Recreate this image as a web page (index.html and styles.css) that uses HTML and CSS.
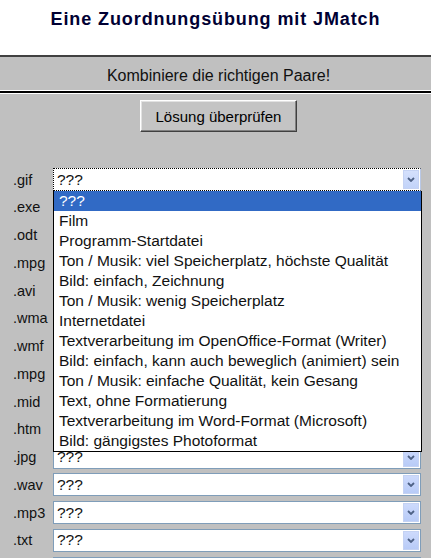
FILE: index.html
```html
<!DOCTYPE html>
<html lang="de">
<head>
<meta charset="utf-8">
<title>Eine Zuordnungsübung mit JMatch</title>
<link rel="stylesheet" href="styles.css">
</head>
<body>
<h2 class="title">Eine Zuordnungsübung mit JMatch</h2>
<div class="panel">
  <div class="instructions">Kombiniere die richtigen Paare!</div>
  <div class="rule"></div>
  <div class="actions"><button class="check" type="button">Lösung überprüfen</button></div>
  <div class="rows">
    <div class="row"><span class="label">.gif</span><div class="select is-open"><span class="value">???</span><span class="arrow"><svg width="8" height="5" viewBox="0 0 8 5"><path d="M1 1 L4 4 L7 1" fill="none" stroke="#4d6185" stroke-width="1.8"/></svg></span></div></div>
    <div class="row"><span class="label">.exe</span><div class="select"><span class="value">???</span><span class="arrow"><svg width="8" height="5" viewBox="0 0 8 5"><path d="M1 1 L4 4 L7 1" fill="none" stroke="#4d6185" stroke-width="1.8"/></svg></span></div></div>
    <div class="row"><span class="label">.odt</span><div class="select"><span class="value">???</span><span class="arrow"><svg width="8" height="5" viewBox="0 0 8 5"><path d="M1 1 L4 4 L7 1" fill="none" stroke="#4d6185" stroke-width="1.8"/></svg></span></div></div>
    <div class="row"><span class="label">.mpg</span><div class="select"><span class="value">???</span><span class="arrow"><svg width="8" height="5" viewBox="0 0 8 5"><path d="M1 1 L4 4 L7 1" fill="none" stroke="#4d6185" stroke-width="1.8"/></svg></span></div></div>
    <div class="row"><span class="label">.avi</span><div class="select"><span class="value">???</span><span class="arrow"><svg width="8" height="5" viewBox="0 0 8 5"><path d="M1 1 L4 4 L7 1" fill="none" stroke="#4d6185" stroke-width="1.8"/></svg></span></div></div>
    <div class="row"><span class="label">.wma</span><div class="select"><span class="value">???</span><span class="arrow"><svg width="8" height="5" viewBox="0 0 8 5"><path d="M1 1 L4 4 L7 1" fill="none" stroke="#4d6185" stroke-width="1.8"/></svg></span></div></div>
    <div class="row"><span class="label">.wmf</span><div class="select"><span class="value">???</span><span class="arrow"><svg width="8" height="5" viewBox="0 0 8 5"><path d="M1 1 L4 4 L7 1" fill="none" stroke="#4d6185" stroke-width="1.8"/></svg></span></div></div>
    <div class="row"><span class="label">.mpg</span><div class="select"><span class="value">???</span><span class="arrow"><svg width="8" height="5" viewBox="0 0 8 5"><path d="M1 1 L4 4 L7 1" fill="none" stroke="#4d6185" stroke-width="1.8"/></svg></span></div></div>
    <div class="row"><span class="label">.mid</span><div class="select"><span class="value">???</span><span class="arrow"><svg width="8" height="5" viewBox="0 0 8 5"><path d="M1 1 L4 4 L7 1" fill="none" stroke="#4d6185" stroke-width="1.8"/></svg></span></div></div>
    <div class="row"><span class="label">.htm</span><div class="select"><span class="value">???</span><span class="arrow"><svg width="8" height="5" viewBox="0 0 8 5"><path d="M1 1 L4 4 L7 1" fill="none" stroke="#4d6185" stroke-width="1.8"/></svg></span></div></div>
    <div class="row"><span class="label">.jpg</span><div class="select"><span class="value">???</span><span class="arrow"><svg width="8" height="5" viewBox="0 0 8 5"><path d="M1 1 L4 4 L7 1" fill="none" stroke="#4d6185" stroke-width="1.8"/></svg></span></div></div>
    <div class="row"><span class="label">.wav</span><div class="select"><span class="value">???</span><span class="arrow"><svg width="8" height="5" viewBox="0 0 8 5"><path d="M1 1 L4 4 L7 1" fill="none" stroke="#4d6185" stroke-width="1.8"/></svg></span></div></div>
    <div class="row"><span class="label">.mp3</span><div class="select"><span class="value">???</span><span class="arrow"><svg width="8" height="5" viewBox="0 0 8 5"><path d="M1 1 L4 4 L7 1" fill="none" stroke="#4d6185" stroke-width="1.8"/></svg></span></div></div>
    <div class="row"><span class="label">.txt</span><div class="select"><span class="value">???</span><span class="arrow"><svg width="8" height="5" viewBox="0 0 8 5"><path d="M1 1 L4 4 L7 1" fill="none" stroke="#4d6185" stroke-width="1.8"/></svg></span></div></div>
    <div class="row"><span class="label">.doc</span><div class="select"><span class="value">???</span><span class="arrow"><svg width="8" height="5" viewBox="0 0 8 5"><path d="M1 1 L4 4 L7 1" fill="none" stroke="#4d6185" stroke-width="1.8"/></svg></span></div></div>
    <ul class="listbox">
      <li class="selected">???</li>
      <li>Film</li>
      <li>Programm-Startdatei</li>
      <li>Ton / Musik: viel Speicherplatz, höchste Qualität</li>
      <li>Bild: einfach, Zeichnung</li>
      <li>Ton / Musik: wenig Speicherplatz</li>
      <li>Internetdatei</li>
      <li>Textverarbeitung im OpenOffice-Format (Writer)</li>
      <li>Bild: einfach, kann auch beweglich (animiert) sein</li>
      <li>Ton / Musik: einfache Qualität, kein Gesang</li>
      <li>Text, ohne Formatierung</li>
      <li>Textverarbeitung im Word-Format (Microsoft)</li>
      <li>Bild: gängigstes Photoformat</li>
    </ul>
  </div>
</div>
</body>
</html>
```
FILE: styles.css
```css
html {
  overflow: hidden;
}
body {
  margin: 0;
  background: #ffffff;
  font-family: "Liberation Sans", Arial, sans-serif;
  color: #000000;
}
.title {
  margin: 0;
  padding: 8px 0 25px;
  font-size: 18px;
  line-height: 22px;
  letter-spacing: 0.9px;
  font-weight: bold;
  text-align: center;
  color: #000033;
}
.panel {
  background: #c0c0c0;
  border-top: 2px solid #404040;
  padding-bottom: 40px;
}
.instructions {
  padding: 9px 0 4px 6px;
  font-size: 16px;
  line-height: 20px;
  text-align: center;
  color: #111111;
}
.rule {
  height: 2px;
  background: #000000;
  border-top: 1px solid #ffffff;
  border-bottom: 1px solid #ffffff;
}
.actions {
  display: flex;
  justify-content: center;
  padding: 6px 0 0 6px;
}
.check {
  width: 157px;
  height: 32px;
  padding: 0;
  font-family: "Liberation Sans", Arial, sans-serif;
  font-size: 15px;
  color: #000000;
  background: #c4c4c4;
  border: 1px solid;
  border-color: #ffffff #404040 #404040 #ffffff;
  box-shadow: inset -1px -1px #808080, inset 1px 1px #e2e2e2;
}
.rows {
  position: relative;
  display: flex;
  flex-direction: column;
  gap: 4.77px;
  padding-top: 36px;
}
.row {
  display: flex;
  align-items: center;
  height: 23px;
}
.label {
  width: 40px;
  padding-left: 13px;
  font-size: 14.5px;
  color: #111111;
}
.select {
  box-sizing: border-box;
  width: 368px;
  height: 23px;
  display: flex;
  align-items: center;
  justify-content: space-between;
  padding-left: 3px;
  background: #ffffff;
  border: 1px solid #7f9db9;
  font-size: 15.5px;
  color: #111111;
}
.select.is-open {
  border: 1px dotted #000000;
  border-right: 1px solid #b9c8e6;
}
.arrow {
  box-sizing: border-box;
  width: 16px;
  height: 19px;
  margin: 1px 1px 1px 0;
  display: flex;
  align-items: center;
  justify-content: center;
  background: linear-gradient(#cddafc, #b8cbf7);
  border: 1px solid #c4d2f3;
}
.is-open .arrow {
  background: linear-gradient(#d4e0fc, #c2d3f9);
}
.listbox {
  position: absolute;
  top: 59px;
  left: 53px;
  box-sizing: border-box;
  width: 369px;
  margin: 0;
  padding: 0;
  list-style: none;
  background: #ffffff;
  border: 1px solid #000000;
  border-top: 0;
}
.listbox li {
  height: 20px;
  line-height: 20px;
  padding-left: 5px;
  font-size: 15.5px;
  color: #111111;
  white-space: nowrap;
}
.listbox li.selected {
  background: #316ac5;
  color: #ffffff;
}
```
